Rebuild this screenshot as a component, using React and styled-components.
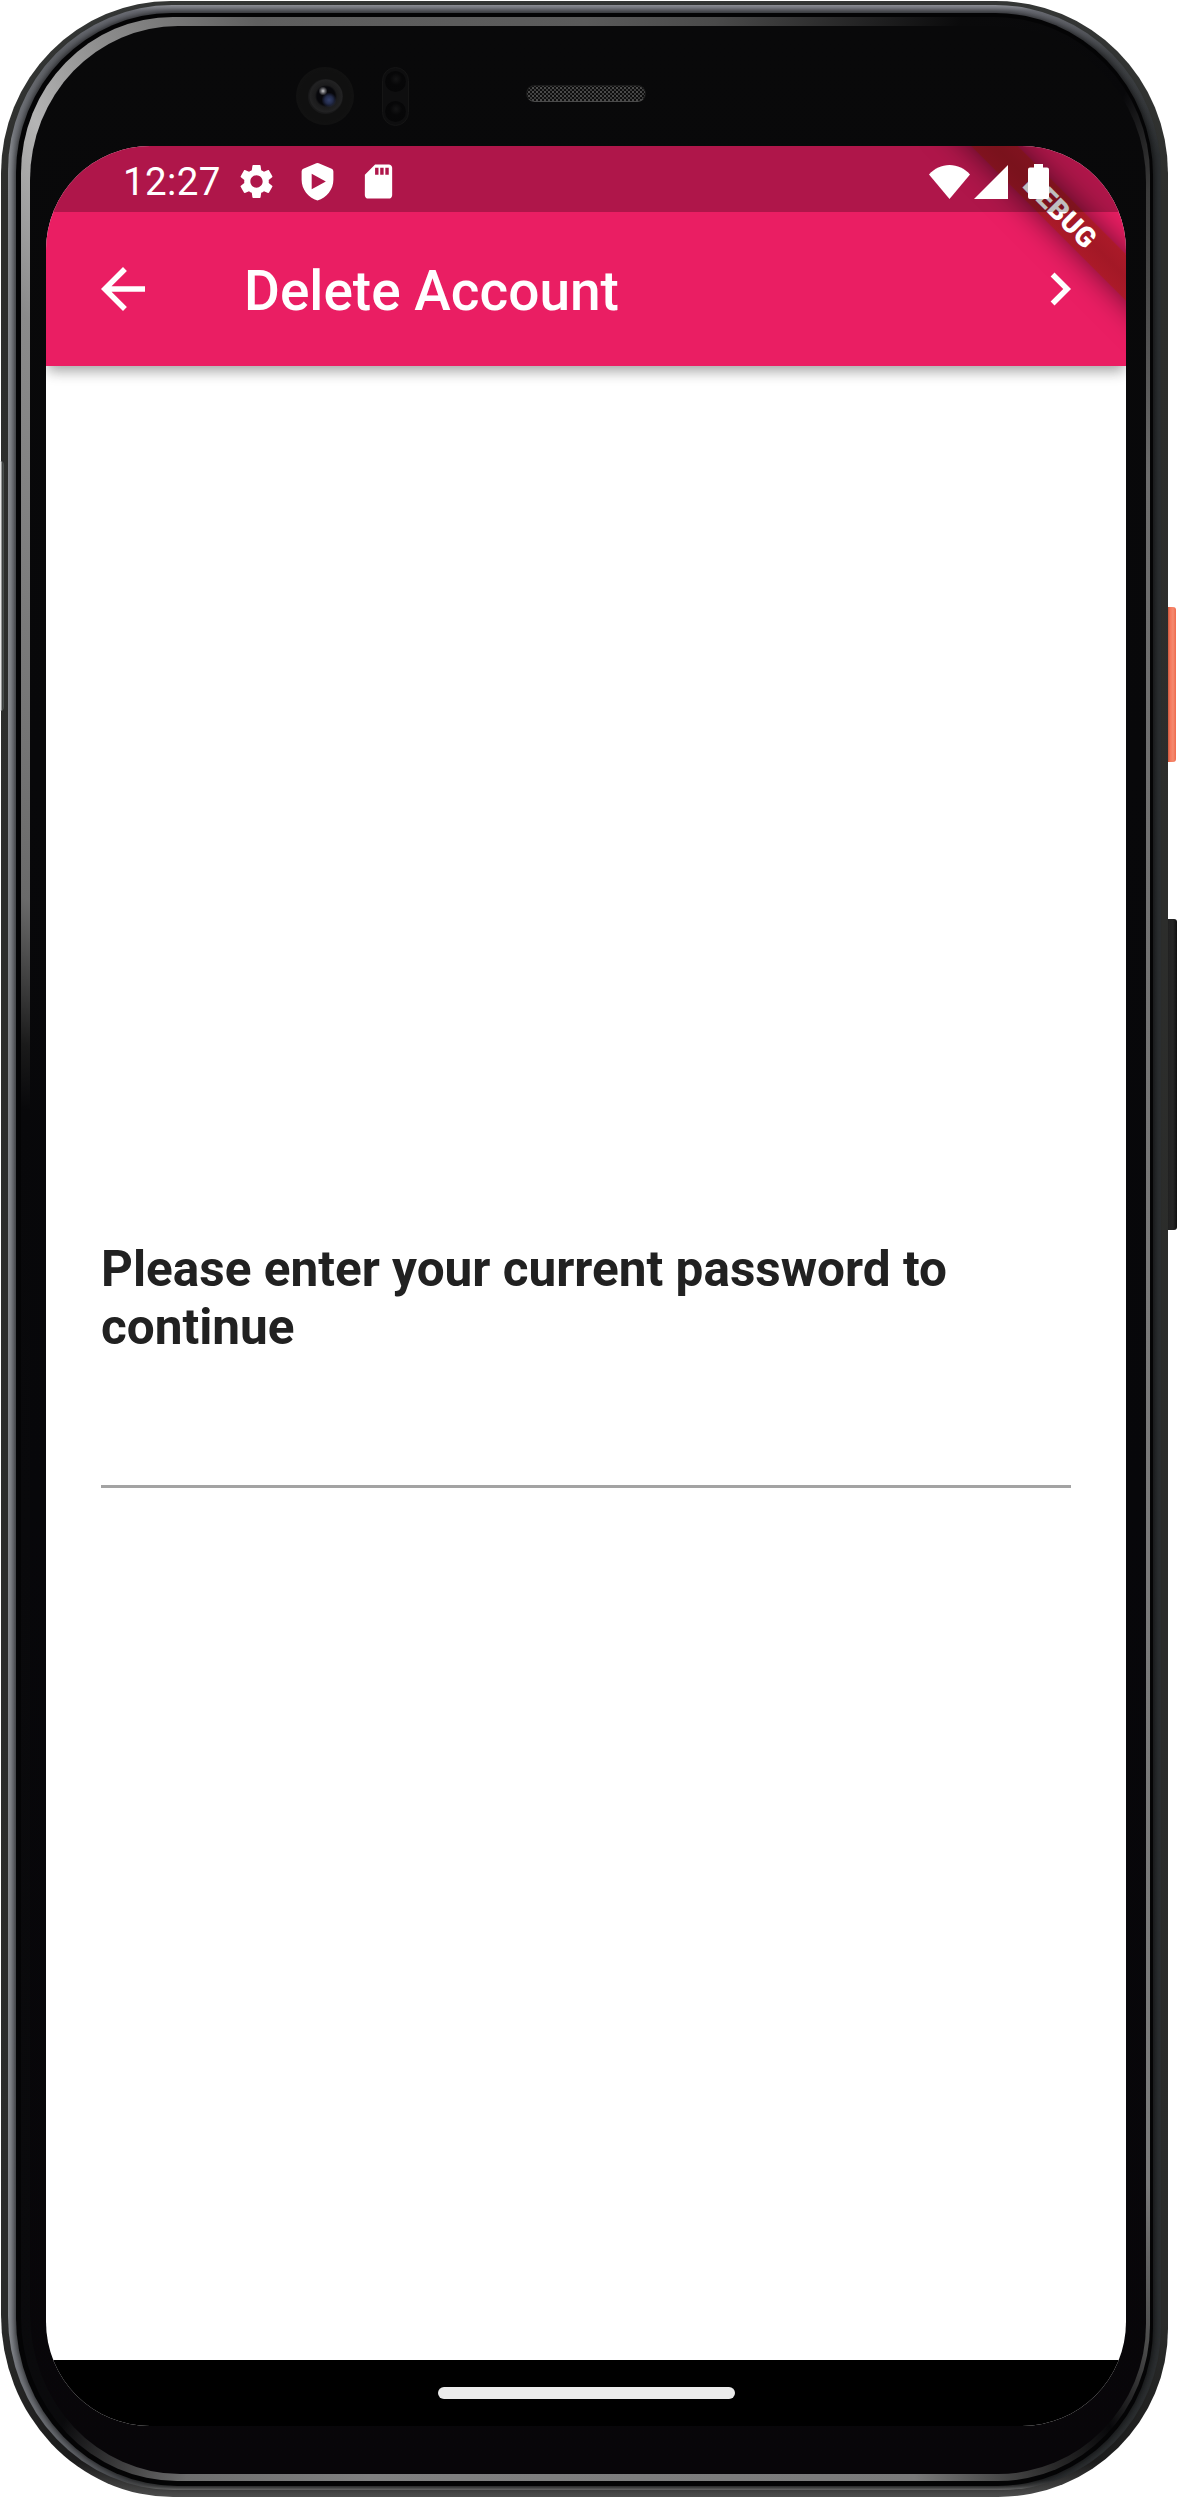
import React from "react";
import styled, { createGlobalStyle } from "styled-components";

const GlobalStyle = createGlobalStyle`
  * { box-sizing: border-box; }
  html, body { margin: 0; padding: 0; background: #fff; }
  body { font-family: Roboto, "Liberation Sans", sans-serif; }
`;

/* ---------- device shell ---------- */

const Stage = styled.div`
  position: relative;
  width: 1178px;
  height: 2498px;
  padding: 1px 10px 1px 1px;
  overflow: hidden;
  background: #fff;
`;

const OuterRim = styled.div`
  position: relative;
  height: 2496px;
  padding: 4px 7px 7px 7px;
  border-radius: 170px 172px 170px 172px / 172px 172px 168px 182px;
  background: linear-gradient(180deg, #343635 0, #2d2e2c 8%, #2a2b2a 93%, #1c1c1c 98.6%, #4c4c4c 100%);
`;

const SteelBand = styled.div`
  height: 100%;
  padding: 8px 8px 4px 8px;
  border-radius: 164px 166px 160px 166px / 166px 168px 162px 174px;
  background:
    linear-gradient(0deg, #777 0, rgba(90, 90, 90, 0.6) 4px, transparent 10px),
    linear-gradient(180deg, #8c8e95 0, rgba(110, 112, 120, 0.9) 6px, rgba(85, 87, 92, 0.5) 50px, transparent 150px),
    linear-gradient(90deg, #8a8d92 0, #777a80 7px, #3a3c3f 160px, #2b2e30 100%);
`;

const BlackGap = styled.div`
  height: 100%;
  padding: 4px 3px 5px 5px;
  border-radius: 156px 158px 156px 162px / 160px 162px 158px 168px;
  background: #040405;
  box-shadow: 0 0 6px 1px rgba(5, 5, 6, 0.75);
`;

const GlassEdge = styled.div`
  height: 100%;
  padding: 9px 4px 7px 9px;
  border-radius: 152px 156px 152px 156px / 156px 158px 156px 164px;
  background: conic-gradient(
    from 0deg at 50% 50%,
    #5a5a5a 0deg,
    #4a4a4a 6deg,
    #0a0a0b 17deg,
    #08080a 25deg,
    #3a3a3a 28deg,
    #6c6c6c 36deg,
    #787878 90deg,
    #7a7a7a 149deg,
    #4a4a4a 153deg,
    #08080a 156deg,
    #2a2a2a 159deg,
    #7a7a7a 165deg,
    #808080 190deg,
    #6e6e6e 198deg,
    #0a0a0c 204deg,
    #08080a 284deg,
    #1a1a1a 290deg,
    #6a6a6a 302deg,
    #7a7a7a 318deg,
    #8a8a8a 329deg,
    #b4b4b4 334deg,
    #8e8e8e 338deg,
    #5f5f5f 345deg,
    #5a5a5a 360deg
  );
`;

const Face = styled.div`
  display: flex;
  flex-direction: column;
  height: 100%;
  padding: 0 20px 0 16px;
  border-radius: 148px 150px 148px 150px / 154px 156px 150px 160px;
  background: linear-gradient(180deg, #09090a 0, #07070a 60%, #080609 100%);
`;

const TopBezel = styled.div`
  display: flex;
  align-items: center;
  flex: none;
  height: 120px;
  padding: 20px 0 0 250px;
`;

const Camera = styled.div`
  display: flex;
  align-items: center;
  justify-content: center;
  width: 58px;
  height: 58px;
  border-radius: 50%;
  background: radial-gradient(circle, #101010 60%, #141414 90%, #0c0c0c 100%);
`;

const Lens = styled.div`
  width: 35px;
  height: 35px;
  border-radius: 50%;
  background:
    radial-gradient(circle at 15px 12px, #c9c9cb 0, #6b6b6f 2px, transparent 4.5px),
    radial-gradient(circle at 21px 21px, #34406a 0, #232b4a 4px, transparent 7.5px),
    radial-gradient(circle at 18px 17px, #07070b 0, #07070b 9px, #1b1b1c 11px, #222223 16px, #19191a 17px);
`;

const Sensors = styled.div`
  display: flex;
  flex-direction: column;
  align-items: center;
  justify-content: space-between;
  width: 27px;
  height: 59px;
  margin-left: 28px;
  padding: 3px 0;
  border: 1px solid #151515;
  border-radius: 14px;
  background: #0e0e0f;
`;

const SensorEye = styled.div`
  width: 21px;
  height: 21px;
  border-radius: 50%;
  background: radial-gradient(circle at 11px 8px, #141415 0, #070708 6px, #060607 100%);
`;

const Speaker = styled.div`
  width: 120px;
  height: 17px;
  margin: 0 0 5px 117px;
  border: 1px solid #1c1c1c;
  border-bottom-color: #4a4a4a;
  border-radius: 9px;
  background:
    radial-gradient(circle, #4a4a4a 0.8px, transparent 1.2px) 0 0 / 4px 4px,
    radial-gradient(circle, #3c3c3c 0.8px, transparent 1.2px) 2px 2px / 4px 4px,
    #0e0e0e;
`;

const SideKey = styled.div`
  position: absolute;
  left: 1165px;
  top: ${(p) => p.$y}px;
  width: ${(p) => p.$w}px;
  height: ${(p) => p.$h}px;
  border-radius: 0 3px 3px 0;
  background: ${(p) => p.$fill};
`;

const RimNotch = styled.div`
  position: absolute;
  left: -5px;
  top: 460px;
  width: 8px;
  height: 250px;
  border-right: 1px solid #4c514f;
  border-radius: 0 4px 4px 0;
  background: linear-gradient(90deg, #f4f4f4 0, #e8e8e8 5px, #454847 6px, #262827 8px);
`;

/* ---------- screen ---------- */

const Screen = styled.div`
  position: relative;
  display: flex;
  flex-direction: column;
  flex: none;
  width: 1080px;
  height: 2280px;
  overflow: hidden;
  border-radius: 104px;
  background: #fff;
`;

const AppBar = styled.header`
  position: relative;
  z-index: 1;
  display: flex;
  align-items: center;
  flex: none;
  height: 220px;
  padding: 66px 33px 0 44px;
  background: #ea1e63;
  color: #fff;
  box-shadow:
    0 6px 12px -2px rgba(0, 0, 0, 0.24),
    0 8px 14px -2px rgba(0, 0, 0, 0.16);
`;

const IconButton = styled.button`
  display: flex;
  width: 66px;
  height: 66px;
  padding: 0;
  border: 0;
  background: none;
  color: inherit;
`;

const Title = styled.h1`
  flex: 1;
  margin: 3px 0 0 88px;
  font-size: 55px;
  font-weight: 500;
  line-height: 64px;
  white-space: nowrap;
`;

const Banner = styled.div`
  position: absolute;
  z-index: 2;
  left: 864px;
  top: 49px;
  width: 300px;
  height: 33px;
  transform: rotate(45deg);
  background: linear-gradient(180deg, #ab1a29 0, #a31826 50%, #ab1a29 100%);
  box-shadow: 0 0 30px rgba(0, 0, 0, 0.55);
  color: #fff;
  font-size: 28px;
  font-weight: 900;
  line-height: 33px;
  text-align: center;
`;

const StatusBar = styled.div`
  position: absolute;
  z-index: 3;
  top: 0;
  left: 0;
  display: flex;
  align-items: center;
  width: 100%;
  height: 66px;
  padding: 5px 77px 0 77px;
  background: rgba(0, 0, 0, 0.25);
  color: #fff;
`;

const Clock = styled.span`
  width: 113px;
  font-size: 38.5px;
  line-height: 46px;
  letter-spacing: 0.35px;
`;

const Notifications = styled.div`
  display: flex;
  flex: 1;
  gap: 20px;
`;

const SystemIcons = styled.div`
  display: flex;
  align-items: center;
`;

const Glyph = styled.svg`
  display: block;
  flex: none;
  width: ${(p) => p.$w}px;
  height: ${(p) => p.$h ?? p.$w}px;
  margin-left: ${(p) => p.$gap ?? 0}px;
  fill: currentColor;
`;

const Content = styled.main`
  display: flex;
  flex: 1;
  flex-direction: column;
  justify-content: center;
  padding: 2px 55px 0;
`;

const Prompt = styled.label`
  color: #212121;
  font-size: 49.5px;
  font-weight: 700;
  line-height: 58px;
`;

const PasswordInput = styled.input`
  width: 100%;
  height: 132px;
  padding: 60px 0 20px;
  border: 0;
  border-bottom: 3px solid #a3a3a3;
  border-radius: 0;
  outline: 0;
  background: transparent;
  font: 400 44px Roboto, sans-serif;
`;

const NavBar = styled.div`
  display: flex;
  align-items: center;
  justify-content: center;
  flex: none;
  height: 66px;
  background: #000;
`;

const HomePill = styled.div`
  width: 297px;
  height: 12px;
  border-radius: 6px;
  background: #ebebeb;
`;

export default function App() {
  return (
    <Stage>
      <GlobalStyle />
      <SideKey
        $y={607}
        $w={11}
        $h={155}
        $fill="linear-gradient(90deg, #c9573c 0 3px, #f5765a 5px, #f58a6f 8px, #ee6a4c 11px)"
      />
      <SideKey
        $y={919}
        $w={12}
        $h={311}
        $fill="linear-gradient(90deg, #151515 0, #232323 4px, #262626 8px, #0f0f0f 12px)"
      />
      <OuterRim>
        <SteelBand>
          <BlackGap>
            <GlassEdge>
              <Face>
                <TopBezel>
                  <Camera>
                    <Lens />
                  </Camera>
                  <Sensors>
                    <SensorEye />
                    <SensorEye />
                  </Sensors>
                  <Speaker />
                </TopBezel>
                <Screen>
                  <AppBar>
                    <IconButton aria-label="Back">
                      <Glyph $w={66} viewBox="0 0 24 24">
                        <path d="M20 11H7.83l5.59-5.59L12 4l-8 8 8 8 1.41-1.41L7.83 13H20v-2z" />
                      </Glyph>
                    </IconButton>
                    <Title>Delete Account</Title>
                    <IconButton aria-label="Next">
                      <Glyph $w={66} viewBox="0 0 24 24">
                        <path d="M10 6L8.59 7.41 13.17 12l-4.58 4.59L10 18l6-6z" />
                      </Glyph>
                    </IconButton>
                  </AppBar>
                  <Banner>DEBUG</Banner>
                  <StatusBar>
                    <Clock>12:27</Clock>
                    <Notifications>
                      <Glyph $w={41} viewBox="0 0 24 24">
                        <path d="M19.14 12.94c.04-.3.06-.61.06-.94 0-.32-.02-.64-.07-.94l2.03-1.58c.18-.14.23-.41.12-.61l-1.92-3.32c-.12-.22-.37-.29-.59-.22l-2.39.96c-.5-.38-1.03-.7-1.62-.94l-.36-2.54c-.04-.24-.24-.41-.48-.41h-3.84c-.24 0-.43.17-.47.41l-.36 2.54c-.59.24-1.13.57-1.62.94l-2.39-.96c-.22-.08-.47 0-.59.22L2.74 8.87c-.12.21-.08.47.12.61l2.03 1.58c-.05.3-.09.63-.09.94s.02.64.07.94l-2.03 1.58c-.18.14-.23.41-.12.61l1.92 3.32c.12.22.37.29.59.22l2.39-.96c.5.38 1.03.7 1.62.94l.36 2.54c.05.24.24.41.48.41h3.84c.24 0 .44-.17.47-.41l.36-2.54c.59-.24 1.13-.56 1.62-.94l2.39.96c.22.08.47 0 .59-.22l1.92-3.32c.12-.22.07-.47-.12-.61l-2.01-1.58zM12 15.6c-1.98 0-3.6-1.62-3.6-3.6s1.62-3.6 3.6-3.6 3.6 1.62 3.6 3.6-1.62 3.6-3.6 3.6z" />
                      </Glyph>
                      <Glyph $w={41} viewBox="0 0 24 24">
                        <path
                          fillRule="evenodd"
                          d="M11.3 1.3q.7-.4 1.4 0l7.6 3.3q1 .5 1 1.5V11c0 5.6-3.9 10.7-9.3 12.1C6.6 21.7 2.7 16.6 2.7 11V6.1q0-1 1-1.5zM8.6 7.5v9l8.3-4.5z"
                        />
                      </Glyph>
                      <Glyph $w={41} viewBox="0 0 24 24">
                        <path d="M18 2h-8L4.02 8 4 20c0 1.1.9 2 2 2h12c1.1 0 2-.9 2-2V4c0-1.1-.9-2-2-2zm-6 6h-2V4h2v4zm3 0h-2V4h2v4zm3 0h-2V4h2v4z" />
                      </Glyph>
                    </Notifications>
                    <SystemIcons>
                      <Glyph $w={41} $h={34} viewBox="0 0 41 34">
                        <path d="M20.5 34L0 9.5C5.5 3.5 12.5 0 20.5 0S35.5 3.5 41 9.5z" />
                      </Glyph>
                      <Glyph $w={34} $h={34} $gap={4} viewBox="0 0 34 34">
                        <path d="M34 0v34H0z" />
                      </Glyph>
                      <Glyph $w={21} $h={35} $gap={20} viewBox="0 0 21 35">
                        <path d="M6 0h9v3.5h4q2 0 2 2V33q0 2-2 2H2q-2 0-2-2V5.5q0-2 2-2h4z" />
                      </Glyph>
                    </SystemIcons>
                  </StatusBar>
                  <Content>
                    <Prompt htmlFor="password">Please enter your current password to continue</Prompt>
                    <PasswordInput id="password" type="password" />
                  </Content>
                  <NavBar>
                    <HomePill />
                  </NavBar>
                </Screen>
              </Face>
            </GlassEdge>
          </BlackGap>
        </SteelBand>
        <RimNotch />
      </OuterRim>
    </Stage>
  );
}
